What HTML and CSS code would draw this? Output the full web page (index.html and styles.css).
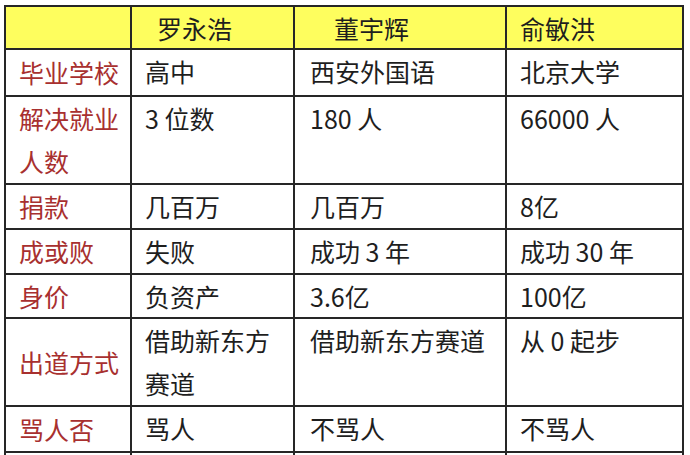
FILE: index.html
```html
<!DOCTYPE html>
<html lang="zh">
<head>
<meta charset="utf-8">
<link rel="stylesheet" href="styles.css">
</head>
<body>
<table class="cmp">
  <colgroup>
    <col class="c1"><col class="c2"><col class="c3"><col class="c4">
  </colgroup>
  <tr class="head h43">
    <th></th>
    <th class="n1">罗永浩</th>
    <th class="n2">董宇辉</th>
    <th class="n3">俞敏洪</th>
  </tr>
  <tr class="h47">
    <td class="k">毕业学校</td><td>高中</td><td class="wide">西安外国语</td><td>北京大学</td>
  </tr>
  <tr class="h88">
    <td class="k">解决就业人数</td><td>3 位数</td><td class="wide">180 人</td><td>66000 人</td>
  </tr>
  <tr class="h45">
    <td class="k">捐款</td><td>几百万</td><td class="wide">几百万</td><td>8亿</td>
  </tr>
  <tr class="h45">
    <td class="k">成或败</td><td>失败</td><td class="wide">成功 3 年</td><td>成功 30 年</td>
  </tr>
  <tr class="h44 tight">
    <td class="k">身价</td><td>负资产</td><td class="wide">3.6亿</td><td>100亿</td>
  </tr>
  <tr class="h88">
    <td class="k">出道方式</td><td>借助新东方赛道</td><td class="wide">借助新东方赛道</td><td>从 0 起步</td>
  </tr>
  <tr class="h46">
    <td class="k">骂人否</td><td>骂人</td><td class="wide">不骂人</td><td>不骂人</td>
  </tr>
  <tr class="h44">
    <td class="k"></td><td></td><td class="wide"></td><td></td>
  </tr>
</table>
</body>
</html>
```

FILE: styles.css
```css
html, body {
  margin: 0;
  padding: 0;
  background: #ffffff;
}
body {
  font-family: "Noto Sans CJK SC", "Noto Sans", sans-serif;
  color: #1e1e1e;
}
.cmp {
  border-collapse: collapse;
  table-layout: fixed;
  width: 679px;
  margin: 5px 0 0 4px;
  font-size: 25px;
}
.c1 { width: 126px; }
.c2 { width: 163px; }
.c3 { width: 212px; }
.c4 { width: 177px; }
.cmp th, .cmp td {
  border: 2px solid #262626;
  padding: 0 8px 0 13px;
  text-align: left;
  font-weight: normal;
  line-height: 43px;
  vertical-align: top;
  white-space: normal;
  overflow: hidden;
}
.cmp td.wide { padding-left: 15px; }
.head th {
  background: #fefe5e;
  line-height: 40px;
  vertical-align: middle;
}
.head th.n1 { padding-left: 25px; }
.head th.n2 { padding-left: 39px; }
.head th.n3 { padding-left: 13px; }
.cmp td.k {
  color: #a8302f;
  vertical-align: middle;
}
.tight td { line-height: 42px; }
.h43 { height: 43px; }
.h44 { height: 44px; }
.h45 { height: 45px; }
.h46 { height: 46px; }
.h47 { height: 47px; }
.h88 { height: 88px; }
```
